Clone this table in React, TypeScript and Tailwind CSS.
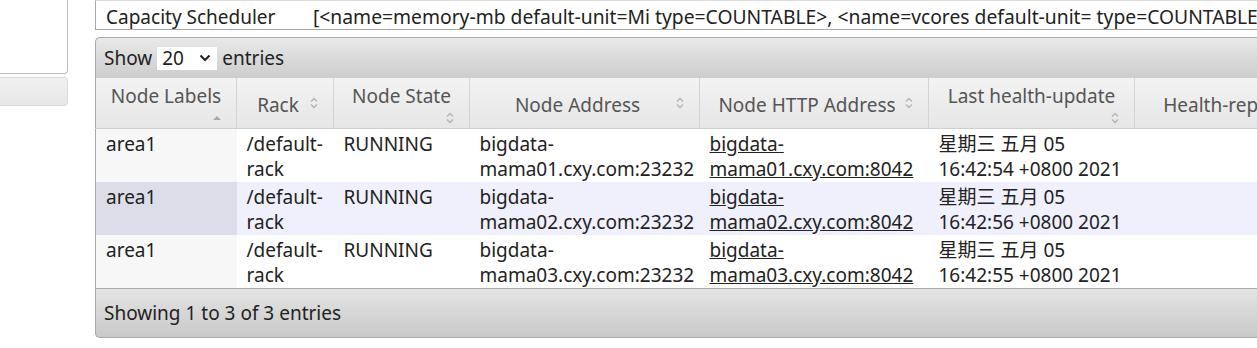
import React from "react";

type Row = {
	label: string;
	rack: string;
	state: string;
	addr: string;
	http: string;
	date: string;
};

const rows: Row[] = [
	{ label: "area1", rack: "/default-rack", state: "RUNNING", addr: "bigdata-mama01.cxy.com:23232", http: "bigdata-mama01.cxy.com:8042", date: "星期三 五月 05 16:42:54 +0800 2021" },
	{ label: "area1", rack: "/default-rack", state: "RUNNING", addr: "bigdata-mama02.cxy.com:23232", http: "bigdata-mama02.cxy.com:8042", date: "星期三 五月 05 16:42:56 +0800 2021" },
	{ label: "area1", rack: "/default-rack", state: "RUNNING", addr: "bigdata-mama03.cxy.com:23232", http: "bigdata-mama03.cxy.com:8042", date: "星期三 五月 05 16:42:55 +0800 2021" },
];

function SortBoth() {
	return (
		<svg width="10" height="14" viewBox="0 0 10 14" className="block">
			<path d="M2 5.5 L5 2.5 L8 5.5" fill="none" stroke="#b4b4b4" strokeWidth="1.4" />
			<path d="M2 8.5 L5 11.5 L8 8.5" fill="none" stroke="#b4b4b4" strokeWidth="1.4" />
		</svg>
	);
}

function SortAsc() {
	return (
		<svg width="10" height="8" viewBox="0 0 10 8" className="block">
			<path d="M1 6 L5 2 L9 6 Z" fill="#a8a8a8" />
		</svg>
	);
}

// header cell: single line (text + icon on the right) or wrapped (icon below)
function Th({ title, width, wrap, asc, last }: { title: string; width: number; wrap?: boolean; asc?: boolean; last?: boolean }) {
	const icon = asc ? <SortAsc /> : <SortBoth />;
	return (
		<th
			style={{ width }}
			className={`h-[50px] p-0 font-normal text-[#555] align-middle ${last ? "" : "border-r border-[#d4d4d4]"}`}
		>
			{last ? (
				<div className="pt-[4px] text-center leading-[25px] whitespace-nowrap">{title}</div>
			) : wrap ? (
				<div className="flex flex-col h-[50px] px-[10px] pt-[7px]">
					<div className="text-center leading-[23px]">{title}</div>
					<div className="flex justify-end items-center h-[19px] pr-[4px]">{icon}</div>
				</div>
			) : (
				<div className="flex items-center h-[50px] pl-[10px] pr-[14px] pt-[4px]">
					<div className="flex-1 text-center leading-[25px]">{title}</div>
					<div className="-mt-[4px]">{icon}</div>
				</div>
			)}
		</th>
	);
}

export default function App() {
	return (
		<div className="flex w-[1257px] h-[348px] overflow-hidden bg-white text-[19px] text-[#222] font-['Noto_Sans','Noto_Sans_CJK_SC',sans-serif]">
			{/* left side panel remnants */}
			<div className="w-[68px] shrink-0">
				<div className="h-[74px] border-r border-b border-[#bcbcbc] rounded-br-[4px]" />
				<div className="mt-[3px] h-[29px] border border-l-0 border-[#d9d9d9] rounded-r-[4px] bg-gradient-to-b from-[#f0f0f0] to-[#e8e8e8]" />
			</div>

			<div className="ml-[27px] w-[1400px] shrink-0">
				{/* scheduler info row */}
				<div className="flex h-[30px] overflow-hidden border-t border-t-[#dcdcdc] border-l border-b border-[#a8a8a8] bg-white pt-[2px] leading-[28px] whitespace-nowrap">
					<div className="w-[207px] pl-[10px]">Capacity Scheduler</div>
					<div className="pl-[10px] text-[19.3px]">
						[&lt;name=memory-mb default-unit=Mi type=COUNTABLE&gt;, &lt;name=vcores default-unit= type=COUNTABLE&gt;]
					</div>
				</div>

				{/* datatable wrapper */}
				<div className="mt-[7px]">
					<div className="flex items-center h-[41px] pl-[8px] border-t border-l border-[#aaa] rounded-tl-[5px] bg-gradient-to-b from-[#e9e9e9] to-[#cdcdcd]">
						<span>Show</span>
						<div className="ml-[5px] mr-[5px] flex items-center justify-between w-[60px] h-[23px] bg-white pl-[5px] pr-[6px]">
							<span className="leading-[23px]">20</span>
							<svg width="12" height="8" viewBox="0 0 12 8">
								<path d="M1.5 1.5 L6 6 L10.5 1.5" fill="none" stroke="#222" strokeWidth="2" />
							</svg>
						</div>
						<span>entries</span>
					</div>

					<table className="table-fixed border-collapse border-l border-[#aaa]" style={{ width: 1217 }}>
						<thead>
							<tr className="bg-gradient-to-b from-[#f3f3f3] to-[#e6e6e6] border-b border-[#cfcfcf]">
								<Th title="Node Labels" width={141} wrap asc />
								<Th title="Rack" width={97} />
								<Th title="Node State" width={136} wrap />
								<Th title="Node Address" width={230} />
								<Th title="Node HTTP Address" width={229} />
								<Th title="Last health-update" width={206} wrap />
								<Th title="Health-report" width={178} last />
							</tr>
						</thead>
						<tbody className="leading-[25px]">
							{rows.map((r, i) => {
								const even = i % 2 === 1;
								const cell = `align-top pl-[10px] pr-[10px] pt-[3px] pb-0 ${even ? "bg-[#f0f0fc]" : "bg-white"}`;
								return (
									<tr key={i}>
										<td className={`align-top pl-[10px] pr-[10px] pt-[3px] pb-0 ${even ? "bg-[#dddde9]" : "bg-[#f7f7f7]"}`}>{r.label}</td>
										<td className={cell}>{r.rack}</td>
										<td className={cell}>{r.state}</td>
										<td className={cell}>{r.addr}</td>
										<td className={cell}>
											<a href="#" className="underline text-[#222]">{r.http}</a>
										</td>
										<td className={cell}>{r.date}</td>
										<td className={cell}></td>
									</tr>
								);
							})}
						</tbody>
					</table>

					<div className="flex items-center h-[50px] pl-[8px] border border-r-0 border-[#aaa] rounded-bl-[5px] bg-gradient-to-b from-[#e4e4e4] to-[#c9c9c9]">
						Showing 1 to 3 of 3 entries
					</div>
				</div>
			</div>
		</div>
	);
}
